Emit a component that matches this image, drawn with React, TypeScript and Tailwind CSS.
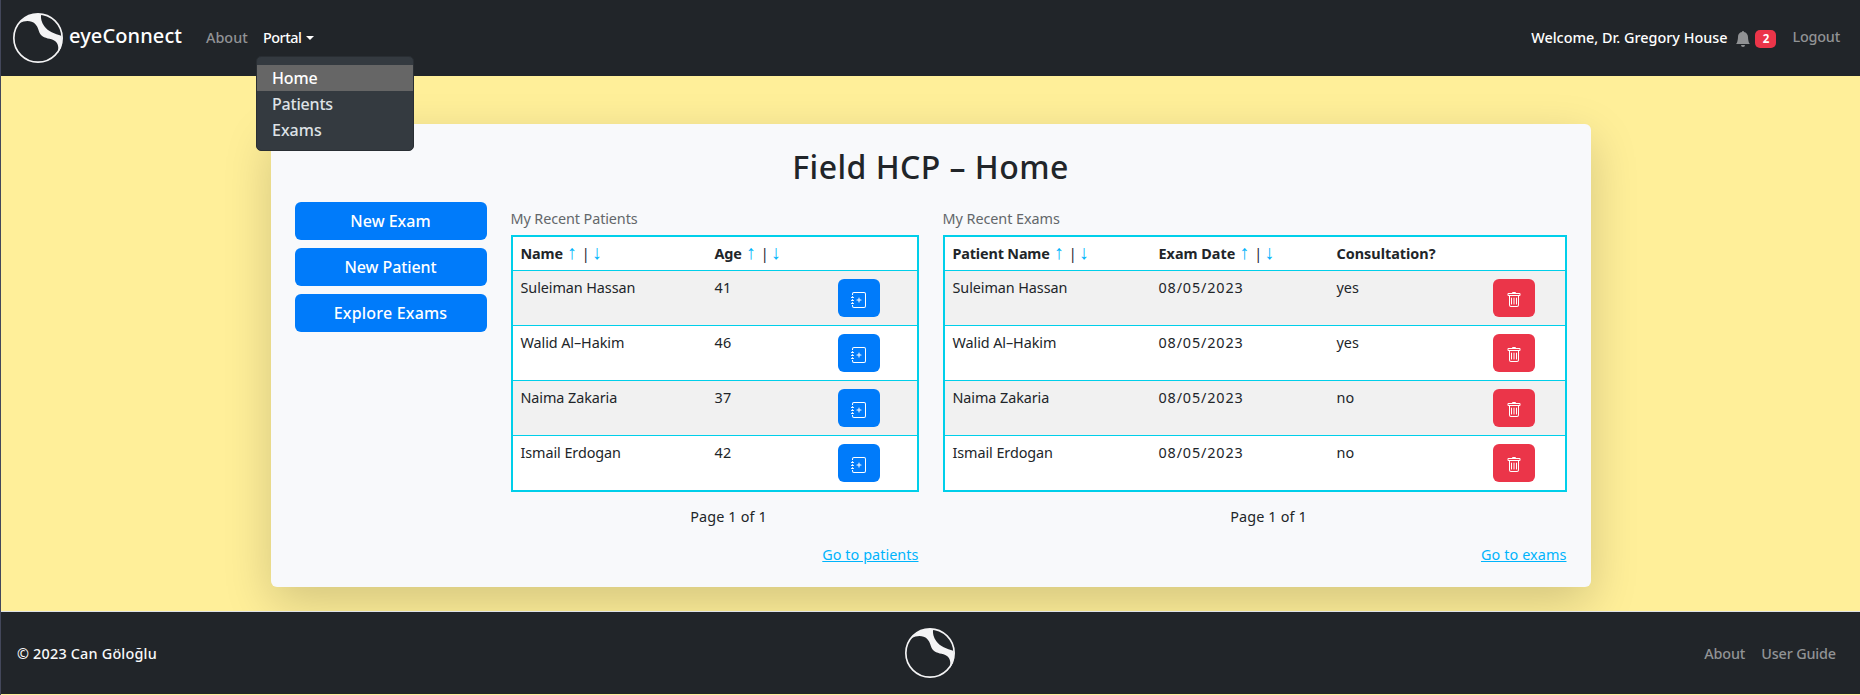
import React from "react";
import { BsBellFill, BsJournalPlus, BsTrash } from "react-icons/bs";

function Logo() {
  return (
    <svg width="50" height="50" viewBox="0 0 150 150" className="shrink-0">
      <circle cx="75" cy="75" r="72.5" fill="none" stroke="#f4f4f5" strokeWidth="5" />
      <path
        d="M20 30 C38 8 62 1 84 4 C83 17 85 28 94 40 C105 56 125 62 146 69 C149 92 144 108 134 121 C138 104 136 92 126 84 C113 75 95 78 84 66 C76 56 77 43 66 32 C56 22 36 21 20 30 Z"
        fill="#f4f4f5"
      />
    </svg>
  );
}

function Sort() {
  return (
    <span className="inline-flex h-[33px] align-top font-normal tracking-normal">
      <span className="ml-[3px] flex w-[12px] justify-center font-['Liberation_Sans'] text-[20px] font-bold leading-[31px] text-[#00b4fb]">↑</span>
      <span className="mx-[4px] w-[5px] text-center">|</span>
      <span className="flex w-[12px] justify-center font-['Liberation_Sans'] text-[20px] font-bold leading-[31px] text-[#00b4fb]">↓</span>
    </span>
  );
}

const patients = [
  ["Suleiman Hassan", "41"],
  ["Walid Al–Hakim", "46"],
  ["Naima Zakaria", "37"],
  ["Ismail Erdogan", "42"],
];

const exams = [
  ["Suleiman Hassan", "08/05/2023", "yes"],
  ["Walid Al–Hakim", "08/05/2023", "yes"],
  ["Naima Zakaria", "08/05/2023", "no"],
  ["Ismail Erdogan", "08/05/2023", "no"],
];

const patientGrid = "grid grid-cols-[194px_123px_1fr]";
const examGrid = "grid grid-cols-[206px_178px_156px_1fr]";
const headStyle = "h-[33px] bg-white pl-2 font-bold leading-[33px] tracking-[-0.15px]";
const rowStyle = "h-[55px] border-t border-[#00cfea] pl-2 pt-[6px] leading-[21px] odd:bg-white even:bg-[#f1f1f1]";
const actionStyle = "mt-[2px] flex h-[38px] w-[42px] items-center justify-center rounded-[6px] pt-[4px] text-white";

export default function App() {
  return (
    <div className="flex h-[695px] w-[1860px] flex-col overflow-hidden border-l border-[#43475a] bg-[#ffef99] font-['Noto_Sans',sans-serif] text-[14.4px] text-[#212529]">
      <nav className="relative z-10 flex h-[76px] shrink-0 items-center bg-[#212529] pl-3 pr-[20px]">
        <Logo />
        <span className="ml-[6px] w-[137px] pb-[4px] text-[20px] font-medium tracking-[0.1px] text-white">eyeConnect</span>
        <a className="w-[57px] font-medium text-[#919395]">About</a>
        <div className="relative flex items-center text-white">
          <span className="font-medium tracking-[-0.5px]">Portal</span>
          <svg className="ml-[5px] mt-[1px]" width="8" height="4" viewBox="0 0 8 4">
            <path d="M0 0h8L4 4z" fill="currentColor" />
          </svg>
          <div className="absolute left-[-7px] top-[29px] w-[158px] rounded-[5px] border border-[#292e33] bg-[#343a40] pb-[7px] pt-[8px] text-[16px] font-medium leading-[26px] text-[#dee2e6]">
            <a className="block bg-[#666] pl-[15px] tracking-[-0.15px] text-white">Home</a>
            <a className="block pl-[15px] tracking-[-0.2px]">Patients</a>
            <a className="block pl-[15px]">Exams</a>
          </div>
        </div>
        <div className="ml-auto flex items-center">
          <span className="font-medium text-white">Welcome, Dr. Gregory House</span>
          <BsBellFill size={16} className="ml-2 mt-[2px] text-[#909294]" />
          <span className="ml-[4px] mt-[2px] flex h-[18px] w-[21px] items-center justify-center rounded-[5px] bg-[#eb3549] text-[11.5px] font-bold text-white">2</span>
          <a className="ml-4 pb-[2px] font-medium tracking-[-0.2px] text-[#919395]">Logout</a>
        </div>
      </nav>

      <main className="relative h-[535px] shrink-0 overflow-hidden pt-[48px]">
        <section className="mx-auto h-[463px] w-[1320px] rounded-[6px] bg-[#f8f9fb] px-6 pt-6 shadow-[0_16px_48px_rgba(0,0,0,0.175)]">
          <h1 className="h-[54px] text-center text-[32px] font-medium leading-[38px] tracking-[0.45px]">Field HCP – Home</h1>
          <div className="flex gap-6">
            <div className="flex w-[192px] flex-col gap-2 text-[16px] font-medium text-white">
              <button className="h-[38px] rounded-[6px] bg-[#007bfa]">New Exam</button>
              <button className="h-[38px] rounded-[6px] bg-[#007bfa] tracking-[-0.1px]">New Patient</button>
              <button className="h-[38px] rounded-[6px] bg-[#007bfa] tracking-[0.2px]">Explore Exams</button>
            </div>

            <div className="flex w-[408px] flex-col">
              <div className="h-[33px] pt-[6px] leading-[22px] tracking-[-0.1px] text-[#63676a]">My Recent Patients</div>
              <div className="border-2 border-[#00cfea]">
                <div className={patientGrid + " " + headStyle}>
                  <div>Name<Sort /></div>
                  <div>Age<Sort /></div>
                </div>
                {patients.map(([name, age]) => (
                  <div key={name} className={patientGrid + " " + rowStyle}>
                    <div className="tracking-[-0.08px]">{name}</div>
                    <div className="tracking-[0.3px]">{age}</div>
                    <div>
                      <button className={actionStyle + " bg-[#007bfa]"}>
                        <BsJournalPlus size={16} />
                      </button>
                    </div>
                  </div>
                ))}
              </div>
              <div className="mt-[14px] pl-7 text-center leading-[22px] tracking-[0.15px]">Page 1 of 1</div>
              <a className="mt-[16px] text-right leading-[22px] tracking-[0.05px] text-[#00b4fb] underline">Go to patients</a>
            </div>

            <div className="flex w-[624px] flex-col">
              <div className="h-[33px] pt-[6px] leading-[22px] tracking-[-0.05px] text-[#63676a]">My Recent Exams</div>
              <div className="border-2 border-[#00cfea]">
                <div className={examGrid + " " + headStyle}>
                  <div>Patient Name<Sort /></div>
                  <div className="tracking-[0px]">Exam Date<Sort /></div>
                  <div className="tracking-[0px]">Consultation?</div>
                </div>
                {exams.map(([name, date, consultation]) => (
                  <div key={name} className={examGrid + " " + rowStyle}>
                    <div className="tracking-[-0.08px]">{name}</div>
                    <div className="tracking-[0.85px]">{date}</div>
                    <div>{consultation}</div>
                    <div>
                      <button className={actionStyle + " bg-[#eb3549]"}>
                        <BsTrash size={16} />
                      </button>
                    </div>
                  </div>
                ))}
              </div>
              <div className="mt-[14px] pl-7 text-center leading-[22px] tracking-[0.15px]">Page 1 of 1</div>
              <a className="mt-[16px] text-right leading-[22px] tracking-[0.1px] text-[#00b4fb] underline">Go to exams</a>
            </div>
          </div>
        </section>
      </main>

      <footer className="grid h-[83px] shrink-0 grid-cols-3 items-center border-t border-[#dee2e6] bg-[#212529] pl-4 pr-6">
        <span className="pt-[2px] font-medium tracking-[0.2px] text-[#f8f9fa]">© 2023 Can Göloğlu</span>
        <span className="flex justify-center pl-2"><Logo /></span>
        <span className="flex justify-end gap-4 pt-[2px] font-medium tracking-[-0.15px] text-[#919395]">
          <a>About</a>
          <a>User Guide</a>
        </span>
      </footer>
    </div>
  );
}
